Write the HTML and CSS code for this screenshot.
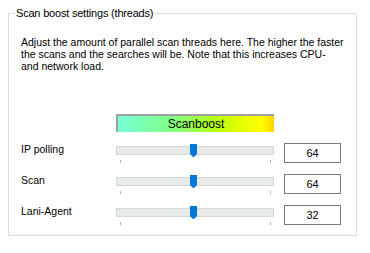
FILE: index.html
```html
<!DOCTYPE html>
<html lang="en">
<head>
    <meta charset="UTF-8">
    <title>Scan boost settings</title>
    <link rel="stylesheet" href="styles.css">
</head>
<body>
    <fieldset class="group">
        <legend>Scan boost settings (threads)</legend>
        <p class="hint">Adjust the amount of parallel scan threads here. The higher the faster<br>the scans and the searches will be. Note that this increases CPU-<br>and network load.</p>

        <div class="boost-row">
            <div class="boost-bar">Scanboost</div>
        </div>

        <div class="rows">
            <div class="row">
                <label class="row-label">IP polling</label>
                <div class="slider">
                    <div class="track"></div>
                    <svg class="thumb" style="left: 74px" width="7" height="13" viewBox="0 0 7 13"><polygon points="0,0 7,0 7,10 4,13 3,13 0,10" fill="#0078d7"/></svg>
                    <div class="ticks"><span></span><span></span></div>
                </div>
                <div class="value">64</div>
            </div>
            <div class="row">
                <label class="row-label">Scan</label>
                <div class="slider">
                    <div class="track"></div>
                    <svg class="thumb" style="left: 74px" width="7" height="13" viewBox="0 0 7 13"><polygon points="0,0 7,0 7,10 4,13 3,13 0,10" fill="#0078d7"/></svg>
                    <div class="ticks"><span></span><span></span></div>
                </div>
                <div class="value">64</div>
            </div>
            <div class="row">
                <label class="row-label">Lani-Agent</label>
                <div class="slider">
                    <div class="track"></div>
                    <svg class="thumb" style="left: 74px" width="7" height="13" viewBox="0 0 7 13"><polygon points="0,0 7,0 7,10 4,13 3,13 0,10" fill="#0078d7"/></svg>
                    <div class="ticks"><span></span><span></span></div>
                </div>
                <div class="value">32</div>
            </div>
        </div>
    </fieldset>
</body>
</html>
```

FILE: styles.css
```css
* {
    margin: 0;
    padding: 0;
    box-sizing: border-box;
}

body {
    background: #ffffff;
    color: #000000;
    font-family: 'Liberation Sans', Arial, sans-serif;
    font-size: 10.5px;
    line-height: 13px;
}

.group {
    margin: 7px 0 0 8px;
    width: 347px;
    height: 229px;
    border: 1px solid #dcdcdc;
    padding: 0 12px 0 12px;
}

.group legend {
    margin-left: -6px;
    padding: 0 1px;
    font-size: 11px;
    line-height: 12px;
    letter-spacing: -0.2px;
}

.hint {
    margin-top: 17px;
    white-space: nowrap;
    line-height: 12px;
}

.boost-row {
    margin-top: 42px;
    padding-left: 95px;
}

.boost-bar {
    width: 158px;
    height: 18px;
    border-top: 2px solid #a0a0a0;
    border-left: 2px solid #a0a0a0;
    background: linear-gradient(to right, #78ffd6 0%, #80ff84 35%, #b4ff14 62%, #e8ff00 80%, #ffff00 92%, #ffd200 100%);
    text-align: center;
    font-size: 12px;
    line-height: 16px;
}

.rows {
    margin-top: 11px;
    display: flex;
    flex-direction: column;
    gap: 11px;
}

.row {
    display: flex;
    align-items: flex-start;
    height: 20px;
}

.row-label {
    width: 95px;
}

.slider {
    position: relative;
    width: 158px;
    height: 20px;
}

.track {
    margin-top: 3px;
    height: 9px;
    border: 1px solid #d6d6d6;
    background: #e7eaea;
}

.thumb {
    position: absolute;
    top: 1px;
    display: block;
}

.ticks {
    display: flex;
    justify-content: space-between;
    margin-top: 5px;
    padding: 0 3px 0 4px;
}

.ticks span {
    display: block;
    width: 1px;
    height: 3px;
    background: #b4b4b4;
}

.value {
    margin-left: 10px;
    width: 57px;
    height: 20px;
    border: 1px solid #7a7a7a;
    text-align: center;
    font-size: 11px;
    line-height: 18px;
}
```
